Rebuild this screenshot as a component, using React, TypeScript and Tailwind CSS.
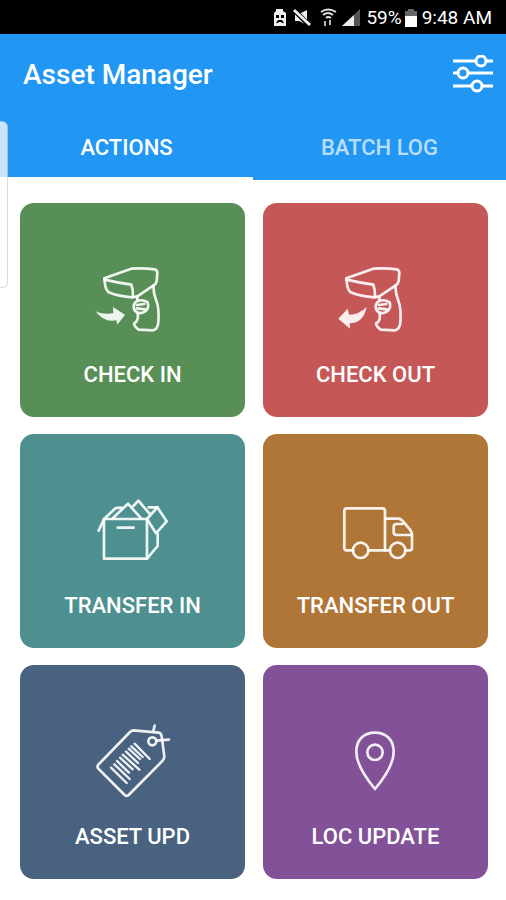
import { useState, type ReactNode } from "react";

function ScannerShape() {
  return (
    <>
      <path d="M71 70 L152 41 Q188 38 222 43 Q230 46 230 54 L228 78 Q226 88 218 92 L170 124 L155 127 Q115 125 84 112 Q76 106 74 94 Z" />
      <path d="M71 74 Q110 83 152 89 Q158 106 157 126" />
      <path d="M170 124 L170 134 M218 92 Q218 116 228 140 Q236 162 233 202 Q231 224 216 226 L174 224 Q160 214 160 205 Q175 197 171 176" />
      <path d="M170 138 Q186 132 201 142 Q207 160 192 170 Q180 178 168 171 Q158 165 159 153 Q161 142 170 138 Z M169 150 L191 147 M169 160 L192 163" />
    </>
  );
}

function CheckInIcon() {
  return (
    <Icon viewBox="7 0 300 270">
      <ScannerShape />
      <path d="M44 168 Q62 179 98 175 L97 156 L133 179 L110 209 L107 196 Q70 204 44 168 Z" fill="currentColor" stroke="none" />
    </Icon>
  );
}

function CheckOutIcon() {
  return (
    <Icon viewBox="1 0 300 270">
      <g transform="translate(-9 0)">
        <ScannerShape />
      </g>
      <path d="M123 156 Q113 205 72 205 L73 221 L38 191 L66 161 L70 179 Q98 180 123 156 Z" fill="currentColor" stroke="none" />
    </Icon>
  );
}

function BoxIcon() {
  return (
    <Icon viewBox="-7 -12 300 270">
      <path d="M56 87 H185 V206 H56 Z" />
      <path d="M185 87 L216 52 L244 94 L212 130 Z M185 206 L217 168 V130" />
      <path d="M56 87 L40 122 M56 87 L91 54 L108 53 M83 84 L128 41 L168 86 M144 48 L159 32 L192 70 M190 52 H216" />
      <path d="M97 113 H145" />
    </Icon>
  );
}

function TruckIcon() {
  return (
    <Icon viewBox="-13 -27 300 270">
      <path d="M68 166 H49 Q42 166 42 159 V48 Q42 40 50 40 H156 Q164 40 164 48 V166 H115" />
      <path d="M164 71 H203 Q211 71 216 77 L239 104 Q245 112 245 120 V158 Q245 166 237 166 H226 M164 166 H179" />
      <path d="M217 87 H199 Q190 87 190 96 V111 Q190 120 199 120 H244" />
      <circle cx="91" cy="166" r="23" />
      <circle cx="202" cy="166" r="23" />
    </Icon>
  );
}

function TagIcon() {
  return (
    <Icon viewBox="-7 6 300 270">
      <path d="M145 46 L219 53 Q228 54 229 64 L237 124 Q237 131 232 137 L130 240 Q124 245 118 240 L39 161 Q34 155 39 149 L134 51 Q139 46 145 46 Z" />
      <circle cx="201" cy="79" r="12" />
      <path d="M213 77 L251 74 M204 48 L208 32" />
      <path
        strokeWidth="7"
        d="M77 158 L124 204 M87 148 L133 192 M95 138 L131 173 M104 128 L142 163 M112 119 L162 164 M122 110 L158 144 M130 101 L164 132 M138 94 L172 126 M148 86 L193 132"
      />
    </Icon>
  );
}

function PinIcon() {
  return (
    <Icon viewBox="-43 -9 300 270">
      <path d="M104 207 Q48 140 48 95 C48 58 72 38 104 38 C136 38 160 58 160 95 Q160 140 104 207 Z" />
      <circle cx="104" cy="97" r="23" />
    </Icon>
  );
}

function Icon({ viewBox, children }: { viewBox: string; children: ReactNode }) {
  return (
    <svg
      viewBox={viewBox}
      className="h-[90px] w-[100px] text-white/90"
      fill="none"
      stroke="currentColor"
      strokeWidth="8"
      strokeLinecap="round"
      strokeLinejoin="round"
      aria-hidden="true"
    >
      {children}
    </svg>
  );
}

function StatusBar() {
  return (
    <div className="flex h-[34px] items-center justify-end bg-black pt-[2px] pr-[14px] text-[19px] text-white">
      <svg viewBox="0 0 90 24" className="mr-1 h-6 w-[90px]" aria-hidden="true">
        <path d="M4 3 H11 V5 L14 7 V20 H2 V7 L4 5 Z" fill="#eee" />
        <path d="M4 9 h3 v3 h-3 z M9 9 h3 v3 h-3 z M4 17 L6 14 H10 L12 17 H10 L9 16 H7 L6 17 Z" fill="#000" />
        <path d="M23 8 H27 L35 4 V19 L27 15 H23 Z" fill="#eee" />
        <path d="M22 4 L38 20" stroke="#000" strokeWidth="5" />
        <path d="M22 4 L38 19" stroke="#eee" strokeWidth="3" />
        <path d="M49 6 Q56 1 64 6 M51 9 Q56 5 61 9 M54 12 Q56 10 59 12" stroke="#ddd" strokeWidth="2" fill="none" />
        <path d="M53 20 V15 M58 14 V19" stroke="#bbb" strokeWidth="2" />
        <path d="M70 20 L88 3 V20 Z" fill="#555" />
        <path d="M70 20 L82 9 V20 Z" fill="#eee" />
      </svg>
      <span>59%</span>
      <svg viewBox="0 0 12 20" className="mr-[5px] ml-[3px] h-5 w-3" aria-hidden="true">
        <path d="M0 3 H3 V1 H9 V3 H12 V8 H0 Z" fill="#666" />
        <path d="M0 8 H12 V19 H0 Z" fill="#fff" />
      </svg>
      <span>9:48 AM</span>
    </div>
  );
}

const tabs = ["ACTIONS", "BATCH LOG"];

const actions = [
  { label: "CHECK IN", color: "bg-[#588f57]", icon: <CheckInIcon /> },
  { label: "CHECK OUT", color: "bg-[#c65757]", icon: <CheckOutIcon /> },
  { label: "TRANSFER IN", color: "bg-[#4e9090]", icon: <BoxIcon /> },
  { label: "TRANSFER OUT", color: "bg-[#b07637]", icon: <TruckIcon /> },
  { label: "ASSET UPD", color: "bg-[#48627f]", icon: <TagIcon /> },
  { label: "LOC UPDATE", color: "bg-[#835197]", icon: <PinIcon /> },
];

export default function App() {
  const [active, setActive] = useState(0);

  return (
    <div className="relative min-h-screen bg-white font-[Roboto,sans-serif]">
      <StatusBar />
      <header className="bg-[#2196f3] text-white">
        <div className="flex h-20 items-center justify-between pt-[2px] pr-3 pl-[23px]">
          <h1 className="text-[28px] leading-8 font-medium">Asset Manager</h1>
          <button type="button" aria-label="Settings">
            <svg viewBox="0 0 42 40" className="h-10 w-[42px]" fill="none" stroke="currentColor" strokeWidth="3" aria-hidden="true">
              <path d="M1 6 H23 M35 6 H41 M1 18 H5 M17 18 H41 M1 31 H19 M31 31 H41" />
              <circle cx="29" cy="6" r="5" />
              <circle cx="11" cy="18" r="5" />
              <circle cx="25" cy="31" r="5" />
            </svg>
          </button>
        </div>
        <div role="tablist" className="grid grid-cols-2">
          {tabs.map((tab, i) => (
            <button
              key={tab}
              type="button"
              role="tab"
              aria-selected={active === i}
              onClick={() => setActive(i)}
              className={
                active === i
                  ? "h-[66px] border-b-3 border-white pt-1 text-[22px] font-medium text-white"
                  : "h-[66px] border-b-3 border-transparent pt-1 text-[22px] font-medium text-white/70"
              }
            >
              {tab}
            </button>
          ))}
        </div>
      </header>
      <main className="grid grid-cols-2 gap-x-[18px] gap-y-[17px] pt-[23px] pr-[18px] pb-5 pl-5">
        {actions.map((action) => (
          <button
            key={action.label}
            type="button"
            className={`flex flex-col items-center gap-4 rounded-[14px] pt-[52px] pb-7 text-white ${action.color}`}
          >
            {action.icon}
            <span className="text-[22px] leading-7 font-medium">{action.label}</span>
          </button>
        ))}
      </main>
      <div className="absolute top-[121px] left-0 h-[167px] w-2 rounded-r-md border border-l-0 border-black/15 bg-white/75" />
    </div>
  );
}
